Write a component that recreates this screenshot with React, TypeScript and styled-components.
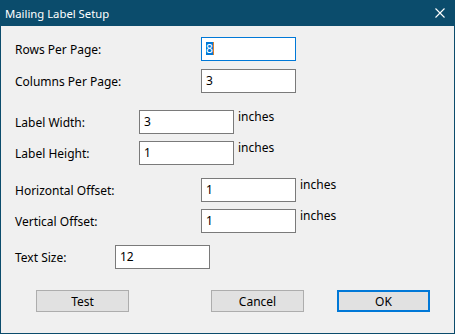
import styled, { createGlobalStyle } from "styled-components";

const GlobalStyle = createGlobalStyle`
    body {
        margin: 0;
        font-family: "Noto Sans", "Liberation Sans", sans-serif;
        font-size: 12px;
        color: #000;
        background: #f0f0f0;
    }
`;

const Window = styled.div`
    width: 455px;
    height: 334px;
    box-sizing: border-box;
    display: flex;
    flex-direction: column;
    border: solid 1px #0b4c6c;
    border-top: none;
    background-color: #f0f0f0;
`;

const TitleBar = styled.div`
    height: 26px;
    margin: 0 -1px;
    padding: 0 10px 0 5px;
    display: flex;
    align-items: center;
    justify-content: space-between;
    background-color: #0b4c6c;
    color: #fff;
    font-size: 11.3px;
`;

const Body = styled.div`
    flex: 1;
    display: flex;
    flex-direction: column;
    padding: 11px 0 0 14px;
`;

const Row = styled.div<{ $top: number }>`
    display: flex;
    align-items: center;
    margin-top: ${(p) => p.$top}px;
`;

const Label = styled.div<{ $width: number }>`
    width: ${(p) => p.$width}px;
    white-space: nowrap;
`;

const TextBox = styled.div<{ $focused?: boolean }>`
    width: 95px;
    height: 24px;
    box-sizing: border-box;
    padding: 2px 4px;
    line-height: 17px;
    background: #fff;
    border: solid 1px ${(p) => (p.$focused ? "#0078d7" : "#7a7a7a")};
`;

// highlighted text with the caret after it
const Selected = styled.span`
    display: inline-block;
    background: #0078d7;
    color: #fff;
    line-height: 13px;
    border-right: solid 1px #d9822b;
`;

const Unit = styled.span`
    align-self: flex-start;
    margin-left: 4px;
    line-height: 14px;
`;

const ButtonRow = styled.div`
    display: flex;
    margin-top: 21px;
    padding-left: 21px;
`;

const Button = styled.button<{ $left: number; $default?: boolean }>`
    width: 93px;
    height: 22px;
    margin-left: ${(p) => p.$left}px;
    padding: 0;
    font-family: inherit;
    font-size: 12px;
    color: #000;
    background: #e1e1e1;
    border: solid ${(p) => (p.$default ? "2px #0078d7" : "1px #adadad")};
`;

function field(label: string, value: string, labelWidth: number, top: number, unit?: boolean) {
    return <Row $top={top}>
        <Label $width={labelWidth}>{label}</Label>
        <TextBox>{value}</TextBox>
        {unit && <Unit>inches</Unit>}
    </Row>
}

export default function App() {
    return <>
    <GlobalStyle />
    <Window>
        <TitleBar>
            <span>Mailing Label Setup</span>
            <svg width="10" height="10" viewBox="0 0 10 10">
                <path d="M0.5 0.5 L9.5 9.5 M9.5 0.5 L0.5 9.5" stroke="#fff" strokeWidth="1.1" />
            </svg>
        </TitleBar>
        <Body>
            <Row $top={0}>
                <Label $width={186}>Rows Per Page:</Label>
                <TextBox $focused><Selected>8</Selected></TextBox>
            </Row>
            {field("Columns Per Page:", "3", 186, 8)}
            {field("Label Width:", "3", 124, 17, true)}
            {field("Label Height:", "1", 124, 7, true)}
            {field("Horizontal Offset:", "1", 186, 13, true)}
            {field("Vertical Offset:", "1", 186, 7, true)}
            {field("Text Size:", "12", 100, 12)}
            <ButtonRow>
                <Button $left={0}>Test</Button>
                <Button $left={82}>Cancel</Button>
                <Button $left={33} $default>OK</Button>
            </ButtonRow>
        </Body>
    </Window>
    </>;
}
